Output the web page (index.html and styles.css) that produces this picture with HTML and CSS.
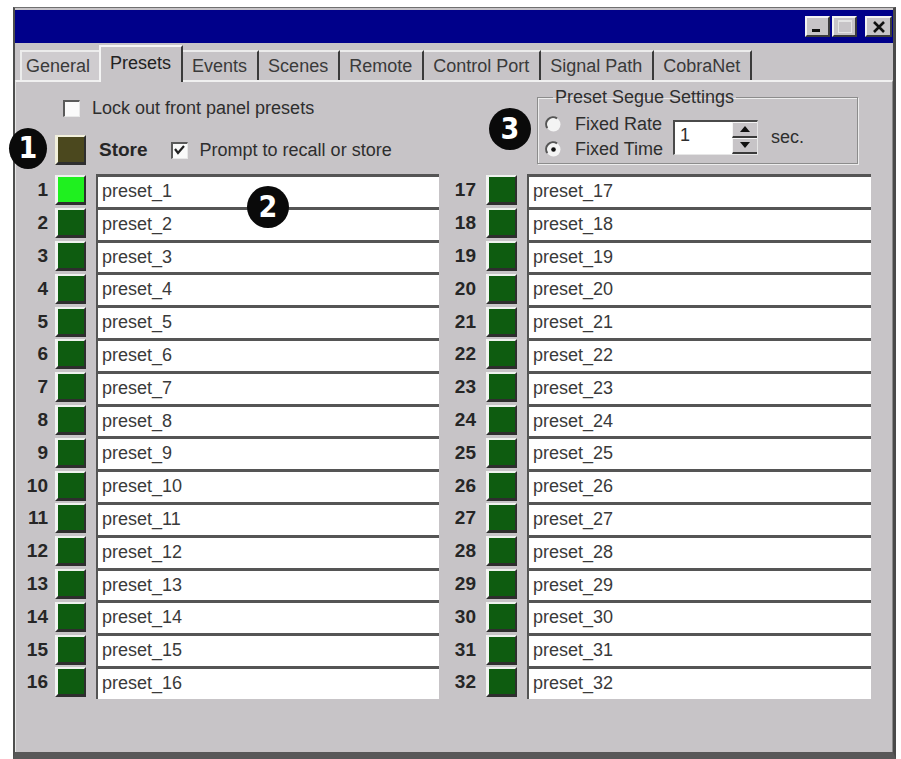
FILE: index.html
```html
<!DOCTYPE html>
<html lang="en">
<head>
    <meta charset="UTF-8">
    <meta name="viewport" content="width=device-width, initial-scale=1.0">
    <title>Presets</title>
    <link rel="stylesheet" href="styles.css">
</head>
<body>
    <div class="window">
        <div class="titlebar">
            <span class="cap-btn"><span class="min-glyph"></span></span>
            <span class="cap-btn"><span class="max-glyph"></span></span>
            <span class="cap-btn close">
                <svg width="14" height="12" viewBox="0 0 14 12"><path d="M2 1 L12 11 M12 1 L2 11" stroke="#111" stroke-width="2.6"/></svg>
            </span>
        </div>

        <div class="tabs">
            <span class="tab">General</span>
            <span class="tab active">Presets</span>
            <span class="tab">Events</span>
            <span class="tab">Scenes</span>
            <span class="tab">Remote</span>
            <span class="tab">Control Port</span>
            <span class="tab">Signal Path</span>
            <span class="tab">CobraNet</span>
        </div>

        <div class="panel">
            <div class="top">
                <div class="options">
                    <div class="lock-row">
                        <span class="checkbox"></span>
                        <span class="lbl">Lock out front panel presets</span>
                    </div>
                    <div class="store-row">
                        <span class="pbtn store"></span>
                        <span class="store-lbl">Store</span>
                        <span class="checkbox">
                            <svg width="13" height="13" viewBox="0 0 13 13"><path d="M2 5 L5 9 L11 2" fill="none" stroke="#222" stroke-width="2.2"/></svg>
                        </span>
                        <span class="lbl">Prompt to recall or store</span>
                    </div>
                </div>

                <fieldset class="segue">
                    <legend>Preset Segue Settings</legend>
                    <div class="segue-body">
                        <div class="radios">
                            <div class="radio-row">
                                <svg class="radio" width="17" height="17" viewBox="0 0 17 17">
                                    <circle cx="8.5" cy="8.5" r="7" fill="#f4f4f4"/>
                                    <path d="M2.3 12 A7 7 0 0 1 12 2.3" fill="none" stroke="#555" stroke-width="2"/>
                                </svg>
                                <span>Fixed Rate</span>
                            </div>
                            <div class="radio-row">
                                <svg class="radio" width="17" height="17" viewBox="0 0 17 17">
                                    <circle cx="8.5" cy="8.5" r="7" fill="#f4f4f4"/>
                                    <path d="M2.3 12 A7 7 0 0 1 12 2.3" fill="none" stroke="#555" stroke-width="2"/>
                                    <circle cx="8.5" cy="8.5" r="2.3" fill="#111"/>
                                </svg>
                                <span>Fixed Time</span>
                            </div>
                        </div>
                        <div class="spin">
                            <span class="spin-val">1</span>
                            <span class="spin-btns">
                                <span class="spin-btn"><svg width="10" height="6" viewBox="0 0 10 6"><path d="M5 0 L10 6 L0 6 Z" fill="#111"/></svg></span>
                                <span class="spin-btn"><svg width="10" height="6" viewBox="0 0 10 6"><path d="M0 0 L10 0 L5 6 Z" fill="#111"/></svg></span>
                            </span>
                        </div>
                        <span class="sec">sec.</span>
                    </div>
                </fieldset>
            </div>

            <div class="presets">
                <div class="preset-col">
                    <div class="row"><span class="num">1</span><span class="pbtn lit"></span><span class="name">preset_1</span></div>
                    <div class="row"><span class="num">2</span><span class="pbtn"></span><span class="name">preset_2</span></div>
                    <div class="row"><span class="num">3</span><span class="pbtn"></span><span class="name">preset_3</span></div>
                    <div class="row"><span class="num">4</span><span class="pbtn"></span><span class="name">preset_4</span></div>
                    <div class="row"><span class="num">5</span><span class="pbtn"></span><span class="name">preset_5</span></div>
                    <div class="row"><span class="num">6</span><span class="pbtn"></span><span class="name">preset_6</span></div>
                    <div class="row"><span class="num">7</span><span class="pbtn"></span><span class="name">preset_7</span></div>
                    <div class="row"><span class="num">8</span><span class="pbtn"></span><span class="name">preset_8</span></div>
                    <div class="row"><span class="num">9</span><span class="pbtn"></span><span class="name">preset_9</span></div>
                    <div class="row"><span class="num">10</span><span class="pbtn"></span><span class="name">preset_10</span></div>
                    <div class="row"><span class="num">11</span><span class="pbtn"></span><span class="name">preset_11</span></div>
                    <div class="row"><span class="num">12</span><span class="pbtn"></span><span class="name">preset_12</span></div>
                    <div class="row"><span class="num">13</span><span class="pbtn"></span><span class="name">preset_13</span></div>
                    <div class="row"><span class="num">14</span><span class="pbtn"></span><span class="name">preset_14</span></div>
                    <div class="row"><span class="num">15</span><span class="pbtn"></span><span class="name">preset_15</span></div>
                    <div class="row"><span class="num">16</span><span class="pbtn"></span><span class="name">preset_16</span></div>
                </div>
                <div class="preset-col right">
                    <div class="row"><span class="num">17</span><span class="pbtn"></span><span class="name">preset_17</span></div>
                    <div class="row"><span class="num">18</span><span class="pbtn"></span><span class="name">preset_18</span></div>
                    <div class="row"><span class="num">19</span><span class="pbtn"></span><span class="name">preset_19</span></div>
                    <div class="row"><span class="num">20</span><span class="pbtn"></span><span class="name">preset_20</span></div>
                    <div class="row"><span class="num">21</span><span class="pbtn"></span><span class="name">preset_21</span></div>
                    <div class="row"><span class="num">22</span><span class="pbtn"></span><span class="name">preset_22</span></div>
                    <div class="row"><span class="num">23</span><span class="pbtn"></span><span class="name">preset_23</span></div>
                    <div class="row"><span class="num">24</span><span class="pbtn"></span><span class="name">preset_24</span></div>
                    <div class="row"><span class="num">25</span><span class="pbtn"></span><span class="name">preset_25</span></div>
                    <div class="row"><span class="num">26</span><span class="pbtn"></span><span class="name">preset_26</span></div>
                    <div class="row"><span class="num">27</span><span class="pbtn"></span><span class="name">preset_27</span></div>
                    <div class="row"><span class="num">28</span><span class="pbtn"></span><span class="name">preset_28</span></div>
                    <div class="row"><span class="num">29</span><span class="pbtn"></span><span class="name">preset_29</span></div>
                    <div class="row"><span class="num">30</span><span class="pbtn"></span><span class="name">preset_30</span></div>
                    <div class="row"><span class="num">31</span><span class="pbtn"></span><span class="name">preset_31</span></div>
                    <div class="row"><span class="num">32</span><span class="pbtn"></span><span class="name">preset_32</span></div>
                </div>
            </div>
        </div>

        <!-- callout markers -->
        <span class="callout c1">1</span>
        <span class="callout c2">2</span>
        <span class="callout c3">3</span>
    </div>
</body>
</html>
```

FILE: styles.css
```css
body {
    margin: 0;
    background: #fff;
    font-family: "Liberation Sans", Arial, sans-serif;
    color: #2e2e2e;
}
.window {
    position: relative;
    margin: 7px 0 0 13px;
    width: 883px;
    height: 752px;
    box-sizing: border-box;
    padding-top: 2px;
    background: #c7c4c7;
    border-top: 1px solid #707070;
    border-left: 2px solid #4e4e4e;
    border-right: 3px solid #4a4a4a;
    border-bottom: 7px solid #585858;
    display: flex;
    flex-direction: column;
}

/* title bar */
.titlebar {
    height: 33px;
    background: #00008a;
    display: flex;
    align-items: center;
    justify-content: flex-end;
    padding-right: 1px;
    gap: 2px;
}
.cap-btn {
    width: 25px;
    height: 21px;
    box-sizing: border-box;
    background: #c7c4c7;
    border-top: 2px solid #f2f2f2;
    border-left: 2px solid #f2f2f2;
    border-right: 2px solid #3c3c3c;
    border-bottom: 2px solid #3c3c3c;
    position: relative;
    display: flex;
    align-items: center;
    justify-content: center;
}
.cap-btn.close {
    width: 27px;
    margin-left: 6px;
}
.min-glyph {
    position: absolute;
    left: 5px;
    bottom: 3px;
    width: 8px;
    height: 3px;
    background: #111;
}
.max-glyph {
    width: 12px;
    height: 10px;
    border: 1px solid #e4e4e4;
    border-top-width: 2px;
}

/* tabs */
.tabs {
    height: 37px;
    display: flex;
    align-items: flex-end;
    padding-left: 5px;
}
.tab {
    height: 30px;
    box-sizing: border-box;
    padding: 0 10px 0 9px;
    border-top: 2px solid #ececec;
    border-right: 2px solid #3a3a3a;
    font-size: 18px;
    line-height: 28px;
    color: #3a3a3a;
    white-space: nowrap;
}
.tab:first-child {
    padding: 0 9px 0 4px;
    border-right: none;
    border-left: 2px solid #ececec;
    background: #cfcccf;
}
.tab.active {
    height: 37px;
    margin-bottom: -2px;
    line-height: 32px;
    border-left: 2px solid #f4f4f4;
    border-top: 2px solid #f4f4f4;
    position: relative;
    z-index: 1;
    background: #c7c4c7;
    color: #222;
}

/* tab page */
.panel {
    flex: 1;
    border-top: 2px solid #f0f0f0;
    border-left: 1px solid #e6e6e6;
    border-right: 1px solid #8a8a8a;
}
.top {
    display: flex;
    padding-top: 14px;
}
.options {
    width: 521px;
}
.lock-row {
    height: 24px;
    display: flex;
    align-items: center;
    padding-left: 47px;
}
.store-row {
    height: 32px;
    margin-top: 14px;
    display: flex;
    align-items: center;
    padding-left: 39px;
}
.lbl {
    font-size: 18px;
    margin-left: 12px;
}
.store-lbl {
    font-size: 19px;
    font-weight: bold;
    margin: 0 23px 0 13px;
    color: #262626;
}
.checkbox {
    width: 17px;
    height: 17px;
    box-sizing: border-box;
    background: #fafafa;
    border-top: 2px solid #5a5a5a;
    border-left: 2px solid #5a5a5a;
    border-right: 1px solid #e8e8e8;
    border-bottom: 1px solid #e8e8e8;
    display: flex;
    align-items: center;
    justify-content: center;
}

/* segue group box */
.segue {
    margin: -8px 0 0 0;
    padding: 6px 8px 0 7px;
    width: 321px;
    height: 76px;
    box-sizing: border-box;
    border: 1px solid #8c8c8c;
    box-shadow: 1px 1px 0 #ededed, inset 1px 1px 0 #ededed;
}
.segue legend {
    font-size: 18px;
    line-height: 18px;
    padding: 0 2px;
    margin-left: 8px;
}
.segue-body {
    display: flex;
    align-items: center;
}
.radio-row {
    height: 25px;
    display: flex;
    align-items: center;
    font-size: 18px;
}
.radio {
    margin-right: 13px;
}
.spin {
    margin-left: 10px;
    width: 85px;
    height: 35px;
    box-sizing: border-box;
    background: #fff;
    border-top: 2px solid #4a4a4a;
    border-left: 2px solid #4a4a4a;
    border-right: 1px solid #e6e6e6;
    border-bottom: 1px solid #e6e6e6;
    display: flex;
    justify-content: space-between;
}
.spin-val {
    font-size: 18px;
    line-height: 26px;
    padding-left: 5px;
}
.spin-btns {
    width: 25px;
    display: flex;
    flex-direction: column;
}
.spin-btn {
    flex: 1;
    background: #c7c4c7;
    border-top: 1px solid #f4f4f4;
    border-left: 1px solid #f4f4f4;
    border-bottom: 2px solid #3a3a3a;
    display: flex;
    align-items: center;
    justify-content: center;
}
.sec {
    font-size: 18px;
    margin-left: 13px;
}

/* preset list */
.presets {
    margin-top: 8px;
    display: grid;
    grid-template-columns: 423px 427px;
    column-gap: 5px;
}
.row {
    height: 32.8px;
    display: flex;
    align-items: center;
}
.num {
    width: 32px;
    margin-right: 7px;
    text-align: right;
    font-size: 19px;
    font-weight: bold;
    color: #262626;
}
.right .num {
    margin-right: 10px;
}
.pbtn {
    width: 31px;
    height: 30px;
    box-sizing: border-box;
    margin-right: 10px;
    background: #0e5c10;
    border-top: 2px solid #eef2ee;
    border-left: 3px solid #f2f4f2;
    border-right: 2px solid #2e2e2e;
    border-bottom: 3px solid #2e2e2e;
}
.pbtn.lit {
    background: #1ff01f;
}
.pbtn.store {
    margin-right: 0;
    background: #4b481e;
    border-top-color: #f2f0dc;
    border-left-color: #f2f0dc;
}
.name {
    flex: 1;
    height: 100%;
    box-sizing: border-box;
    background: #fff;
    border-top: 3px solid #555;
    border-left: 2px solid #555;
    padding-left: 4px;
    font-size: 18px;
    line-height: 28px;
    color: #3a3a3a;
}

/* numbered callouts */
.callout {
    position: absolute;
    width: 40px;
    height: 40px;
    border-radius: 50%;
    background: #0a0a0a;
    color: #fff;
    font-family: "Liberation Sans Narrow", "DejaVu Sans Condensed", sans-serif;
    font-weight: bold;
    font-size: 30px;
    line-height: 40px;
    text-align: center;
    z-index: 2;
}
.c1 { left: -6px; top: 120px; width: 38px; height: 41px; }
.c2 { left: 232px; top: 178px; width: 42px; height: 42px; line-height: 42px; }
.c3 { left: 474px; top: 100px; width: 42px; height: 42px; line-height: 42px; }
```
